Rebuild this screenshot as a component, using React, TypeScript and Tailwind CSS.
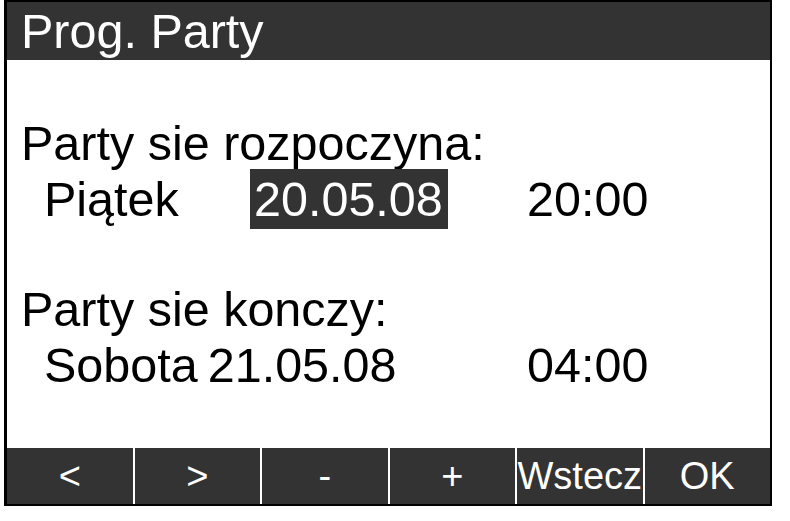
import React from 'react';

const font = { fontFamily: '"Liberation Sans", Arial, sans-serif' };

export default function App() {
  const buttons = ['<', '>', '-', '+', 'Wstecz', 'OK'];

  return (
    <div className="w-[790px] h-[521px] bg-white" style={font}>
      <div className="ml-[4px] w-[768px] border-2 border-l-[3px] border-black flex flex-col">
        {/* title bar */}
        <div className="h-[58px] bg-[#333333] text-white text-[48.5px] leading-[58px] pl-[14px] whitespace-nowrap">
          Prog. Party
        </div>

        {/* content */}
        <div className="h-[388px] pt-[55px] pl-[14px] text-black text-[48.5px] leading-[56px] whitespace-nowrap">
          <div>Party sie rozpoczyna:</div>
          <div className="grid grid-cols-[206px_277px_1fr] pl-[23px]">
            <div>Piątek</div>
            <div>
              <div className="w-[198px] -my-[2px] py-[2px] bg-[#333333] text-white pl-[4px]">20.05.08</div>
            </div>
            <div>20:00</div>
          </div>

          <div className="mt-[54px]">Party sie konczy:</div>
          <div className="grid grid-cols-[206px_277px_1fr] pl-[23px]">
            <div className="col-span-2 flex gap-[10px]">
              <span>Sobota</span>
              <span>21.05.08</span>
            </div>
            <div>04:00</div>
          </div>
        </div>

        {/* soft keys */}
        <div className="h-[56px] grid grid-cols-6 gap-[2px] bg-white">
          {buttons.map(b => (
            <div key={b} className="bg-[#333333] text-white text-[38px] leading-[56px] flex justify-center overflow-hidden whitespace-nowrap">
              {b}
            </div>
          ))}
        </div>
      </div>
    </div>
  );
}
